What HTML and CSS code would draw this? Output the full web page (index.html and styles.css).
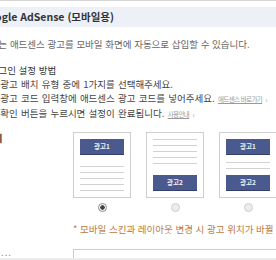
FILE: index.html
```html
<!DOCTYPE html>
<html lang="ko">
<head>
    <meta charset="UTF-8">
    <meta name="viewport" content="width=device-width, initial-scale=1.0">
    <title>Google AdSense (모바일용)</title>
    <link rel="stylesheet" href="styles.css">
</head>
<body>
    <div class="topline"></div>
    <div class="page">
        <h1 class="title">Google AdSense (모바일용)</h1>
        <p class="intro">이제는 애드센스 광고를 모바일 화면에 자동으로 삽입할 수 있습니다.</p>

        <h2 class="howto">플러그인 설정 방법</h2>
        <ol class="steps">
            <li>1. 광고 배치 유형 중에 1가지를 선택해주세요.</li>
            <li>2. 광고 코드 입력창에 애드센스 광고 코드를 넣어주세요. <a class="more" href="#">애드센스 바로가기</a> <span class="arr">›</span></li>
            <li>3. 확인 버튼을 누르시면 설정이 완료됩니다. <a class="more" href="#">사용안내</a> <span class="arr">›</span></li>
        </ol>

        <div class="row">
            <div class="label">위치</div>
            <div class="field">
                <div class="cards">
                    <div class="card">
                        <div class="ad">광고1</div>
                        <div class="lines">
                            <div class="line"></div>
                            <div class="line"></div>
                            <div class="line"></div>
                            <div class="line"></div>
                            <div class="line"></div>
                        </div>
                    </div>
                    <div class="card">
                        <div class="lines">
                            <div class="line"></div>
                            <div class="line"></div>
                            <div class="line"></div>
                            <div class="line"></div>
                            <div class="line"></div>
                        </div>
                        <div class="ad">광고2</div>
                    </div>
                    <div class="card">
                        <div class="ad">광고1</div>
                        <div class="lines">
                            <div class="line"></div>
                            <div class="line"></div>
                        </div>
                        <div class="ad">광고2</div>
                    </div>
                </div>
                <div class="radios">
                    <div class="pick"><span class="radio on"></span></div>
                    <div class="pick"><span class="radio"></span></div>
                    <div class="pick"><span class="radio"></span></div>
                </div>
                <p class="note">* 모바일 스킨과 레이아웃 변경 시 광고 위치가 바뀔 수 있습니다.</p>
            </div>
        </div>

        <div class="row">
            <div class="label label-more">...</div>
            <div class="field">
                <div class="codebox"></div>
            </div>
        </div>
    </div>
    <div class="bottom"></div>
</body>
</html>
```

FILE: styles.css
```css
body{
    margin: 0;
    width: 276px;
    overflow: hidden;
    font-family: "Noto Sans CJK KR", sans-serif;
    font-size: 9.5px;
    color: #444;
    background: #fff;
}

.topline{
    border-top: 1px solid #d6d6d6;
}

.page{
    margin-left: -19px;
    width: 420px;
    white-space: nowrap;
}

.title{
    margin: 6px 0 0;
    height: 20px;
    line-height: 20px;
    font-size: 10.5px;
    font-weight: bold;
    color: #333;
    background: #eef0f7;
}

.intro{
    margin: 10px 0 0;
    line-height: 14px;
    color: #666;
}

.howto{
    margin: 12px 0 0;
    line-height: 14px;
    font-size: 9.5px;
    font-weight: normal;
    color: #333;
}

.steps{
    margin: 0;
    padding: 0 0 0 8px;
    list-style: none;
}
.steps li{
    line-height: 14px;
    word-spacing: 0.6px;
}

.more{
    color: #9a9a9a;
    font-size: 6.5px;
    letter-spacing: -0.6px;
    word-spacing: 0;
    text-decoration: underline;
}
.arr{
    color: #999;
    font-size: 7px;
}

.row{
    display: flex;
}
.row:first-of-type{
    margin-top: 11px;
}
.label{
    width: 92px;
    flex-shrink: 0;
    box-sizing: border-box;
    padding-left: 4px;
    line-height: 12px;
    font-weight: bold;
    color: #333;
}
.label-more{
    padding: 0 0 0 20px;
    font-weight: normal;
    color: #777;
    letter-spacing: 1px;
    line-height: 6px;
}

.cards{
    display: flex;
    gap: 15px;
}
.card{
    width: 44px;
    height: 52px;
    padding: 6px;
    border: 1px solid #cfcfcf;
    display: flex;
    flex-direction: column;
    justify-content: space-between;
}
.ad{
    height: 15px;
    line-height: 15px;
    border-bottom: 1px solid #34406b;
    background: #4b5a8e;
    color: #eef1f8;
    font-size: 6.5px;
    font-weight: bold;
    text-align: center;
}
.lines{
    display: flex;
    flex-direction: column;
    gap: 5px;
}
.line{
    height: 1px;
    background: #d2d2d2;
}

.radios{
    display: flex;
    gap: 15px;
    margin-top: 5px;
}
.pick{
    width: 58px;
    display: flex;
    justify-content: center;
}
.radio{
    width: 7px;
    height: 7px;
    border-radius: 50%;
    border: 1px solid #cfcfcf;
    background: #ececec;
}
.radio.on{
    border-color: #8a8a8a;
    background: radial-gradient(circle, #444 0 2px, #fff 2.5px);
}

.note{
    margin: 10px 0 0;
    line-height: 14px;
    color: #bd7b43;
}

.row + .row{
    margin-top: 13px;
}
.codebox{
    width: 260px;
    height: 8px;
    border-top: 1px solid #cdcdcd;
    border-left: 1px solid #cdcdcd;
}

.bottom{
    height: 10px;
    background: #ededed;
}
```
